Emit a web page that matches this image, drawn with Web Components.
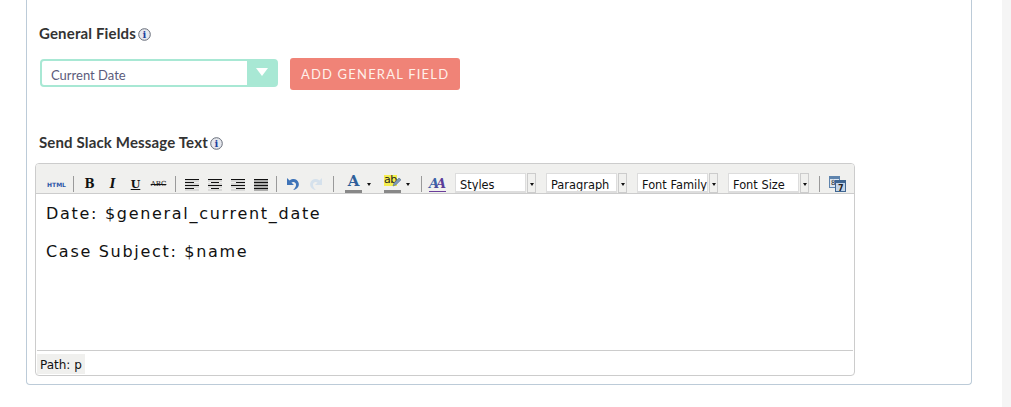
<!DOCTYPE html>
<html>
<head>
<meta charset="utf-8">
<title>Send Slack Message</title>
<style>
  html, body { margin: 0; padding: 0; background: #fff; }
  body { font-family: "Lato", sans-serif; overflow: hidden; }
</style>
</head>
<body>
<app-page>
  <field-label>General Fields</field-label>
  <div slot="fields">
    <field-select>Current Date</field-select>
    <add-button>ADD GENERAL FIELD</add-button>
  </div>
  <field-label slot="second">Send Slack Message Text</field-label>
  <rich-editor slot="editor">
    <tool-button>
      <span style="font:bold 6px 'DejaVu Sans',sans-serif;color:#2d56a8">HTML</span>
    </tool-button>
    <tool-sep></tool-sep>
    <tool-button><span style="font:bold 12px 'DejaVu Serif',serif;color:#111">B</span></tool-button>
    <tool-button><span style="font:italic bold 12px 'DejaVu Serif',serif;color:#111">I</span></tool-button>
    <tool-button><span style="font:bold 11px 'DejaVu Serif',serif;color:#111;text-decoration:underline">U</span></tool-button>
    <tool-button><span style="font:7px 'DejaVu Serif',serif;color:#111;text-decoration:line-through">ABC</span></tool-button>
    <tool-sep></tool-sep>
    <tool-button><svg width="16" height="13"><path d="M1 1.500h14M1 4.500h9M1 7.500h14M1 10.500h9" stroke="#111" fill="none"/><path d="M1 3h14M1 6h14M1 9h14M1 12h14" stroke="#999" stroke-width=".5" fill="none"/></svg></tool-button>
    <tool-button><svg width="16" height="13"><path d="M1 1.500h14M4 4.500h8M1 7.500h14M4 10.500h8" stroke="#111" fill="none"/><path d="M1 3h14M1 6h14M1 9h14M1 12h14" stroke="#999" stroke-width=".5" fill="none"/></svg></tool-button>
    <tool-button><svg width="16" height="13"><path d="M1 1.500h14M6 4.500h9M1 7.500h14M6 10.500h9" stroke="#111" fill="none"/><path d="M1 3h14M1 6h14M1 9h14M1 12h14" stroke="#999" stroke-width=".5" fill="none"/></svg></tool-button>
    <tool-button><svg width="16" height="13"><path d="M1 1.500h14M1 4.500h14M1 7.500h14M1 10.500h14" stroke="#111" fill="none"/><path d="M1 3h14M1 6h14M1 9h14M1 12h14" stroke="#111" stroke-width=".6" fill="none"/></svg></tool-button>
    <tool-sep style="width:9px"></tool-sep>
    <tool-button><svg width="14" height="14" viewBox="0 0 14 14"><path d="M1 1v7h7L5.400 5.400C7 4.500 9 4.800 9.800 6.500c.8 1.900-.2 4-2.600 6.500 4.400-.8 6.400-4 5.400-7.300C11.400 1.600 7 .8 3.600 3.400z" fill="#3f74b8"/></svg></tool-button>
    <tool-button><svg width="14" height="14" viewBox="0 0 14 14" style="transform:scaleX(-1)"><path d="M1 1v7h7L5.400 5.400C7 4.500 9 4.800 9.800 6.500c.8 1.900-.2 4-2.600 6.500 4.400-.8 6.400-4 5.400-7.300C11.400 1.600 7 .8 3.600 3.400z" fill="#d5e1ec"/></svg></tool-button>
    <tool-sep style="width:12px"></tool-sep>
    <tool-button arrow bar style="margin-left:3px"><span style="font:bold 15px 'DejaVu Serif',serif;color:#2f5f9a;line-height:15px">A</span></tool-button>
    <tool-button arrow bar style="margin-left:8px">
      <span style="position:relative;display:block;width:17px;height:14px">
        <span style="position:absolute;left:0;top:0;background:#f5ee4e;font:11px/10px 'DejaVu Sans',sans-serif;color:#222;letter-spacing:-.5px;padding-bottom:1px">ab</span>
        <svg width="10" height="11" style="position:absolute;right:0;top:2px"><path d="M2 9l1-3 5-5 2 1.800-5 5z" fill="#7d99b8" stroke="#54708e" stroke-width=".6"/></svg>
      </span>
    </tool-button>
    <tool-sep style="margin-left:4px"></tool-sep>
    <tool-button>
      <span style="font:italic bold 13px/13px 'DejaVu Serif',serif;color:#3a62a8;letter-spacing:-3px;padding:0 3px 1px 0;border-bottom:1.500px solid #6a3d9a"><span>A</span><span style="color:#5a3d98">A</span></span>
    </tool-button>
    <tool-select style="margin-left:6px">Styles</tool-select>
    <tool-select style="margin-left:10px">Paragraph</tool-select>
    <tool-select style="margin-left:10px">Font Family</tool-select>
    <tool-select style="margin-left:10px">Font Size</tool-select>
    <tool-sep style="width:21px"></tool-sep>
    <tool-button style="margin-left:-4px">
      <svg width="17" height="16" viewBox="0 0 17 16">
        <rect x=".5" y=".5" width="10" height="11" fill="#dce6f2" stroke="#5f84ad"/>
        <rect x=".5" y=".5" width="10" height="2.500" fill="#5f84ad"/>
        <rect x="6.500" y="4.500" width="10" height="11" fill="#c4d5e8" stroke="#3f6692"/>
        <rect x="6.500" y="4.500" width="10" height="2.500" fill="#3f6692"/>
        <text x="2" y="9" font-size="7" font-family="DejaVu Sans" fill="#222">8</text>
        <text x="9" y="14.500" font-size="8" font-weight="bold" font-family="DejaVu Sans" fill="#222">7</text>
      </svg>
    </tool-button>
    <p slot="content">Date: $general_current_date</p>
    <p slot="content">Case Subject: $name</p>
    <span slot="path">Path: p</span>
  </rich-editor>
</app-page>

<script>
class AppPage extends HTMLElement {
    constructor() {
        super();
        this.attachShadow({ mode: 'open' }).innerHTML = `
      <style>
        :host{ display:flex; width:1011px; height:407px; overflow:hidden; background:#fff; }
        .main{ flex:0 0 1002px; }
        .side{ flex:1; background:#f5f5f5; }
        .panel{
          box-sizing:border-box;
          width:946px;
          height:385px;
          margin-left:26px;
          padding:25px 0 0 8px;
          border:1px solid #bccbd8;
          border-top:0;
          border-radius:0 0 4px 4px;
        }
        .first{ display:block; margin-left:4px; }
        .row{ margin:16px 0 0 5px; }
        .second{ display:block; margin:44px 0 0 4px; }
        .second2{ display:block; margin-top:12px; }
      </style>
      <div class="main">
        <div class="panel">
          <div class="first"><slot></slot></div>
          <div class="row"><slot name="fields"></slot></div>
          <div class="second"><slot name="second"></slot></div>
          <div class="second2"><slot name="editor"></slot></div>
        </div>
      </div>
      <div class="side"></div>
    `;
    }
}

class FieldLabel extends HTMLElement {
    constructor() {
        super();
        this.attachShadow({ mode: 'open' }).innerHTML = `
      <style>
        :host{ display:flex; align-items:center; height:17px; font:bold 15px/17px "Lato",sans-serif; color:#333; letter-spacing:.15px; }
        svg{ margin-left:2px; margin-top:2px; }
      </style>
      <slot></slot>
      <svg width="13" height="13" viewBox="0 0 13 13">
        <circle cx="6.500" cy="6.500" r="5.800" fill="#e6e8ee" stroke="#666c78"/>
        <text x="6.500" y="10" text-anchor="middle" font-size="10" font-weight="bold" font-family="DejaVu Serif" fill="#1c3f9e">i</text>
      </svg>
    `;
    }
}

class FieldSelect extends HTMLElement {
    constructor() {
        super();
        this.attachShadow({ mode: 'open' }).innerHTML = `
      <style>
        :host{
          display:inline-flex; box-sizing:border-box; vertical-align:top;
          width:238px; height:28px; margin-top:1px;
          border:2px solid #a8e8d4; border-radius:4px;
          font:13px "Lato",sans-serif; color:#5b5b7b; background:#fff;
        }
        .text{ flex:1; padding:2px 0 0 9px; line-height:24px; }
        .arrow{ flex:0 0 29px; background:#a8e8d4; display:flex; justify-content:center; padding-top:7px; box-sizing:border-box; }
        .arrow i{ width:0; height:0; border:6px solid transparent; border-top:8px solid #fff; border-bottom:0; }
      </style>
      <div class="text"><slot></slot></div>
      <div class="arrow"><i></i></div>
    `;
    }
}

class AddButton extends HTMLElement {
    constructor() {
        super();
        this.attachShadow({ mode: 'open' }).innerHTML = `
      <style>
        :host{
          display:inline-flex; align-items:center; justify-content:center; vertical-align:top;
          width:170px; height:32px; margin-left:8px;
          background:#f08377; border-radius:3px;
          font:13px "Lato",sans-serif; letter-spacing:1.2px; color:#fff0ea;
        }
      </style>
      <slot></slot>
    `;
    }
}

class RichEditor extends HTMLElement {
    constructor() {
        super();
        this.attachShadow({ mode: 'open' }).innerHTML = `
      <style>
        :host{
          display:flex; flex-direction:column; box-sizing:border-box;
          width:820px; height:213px;
          border:1px solid #ccc; border-radius:4px; background:#fff;
        }
        .toolbar{
          display:flex; align-items:flex-start; height:30px; box-sizing:border-box;
          padding:9px 0 0 9px;
          background:#f0f0ee; border-bottom:1px solid #ccc; border-radius:3px 3px 0 0;
        }
        .content{
          flex:1;
          padding:10px 10px 0;
          font:16px/20px "DejaVu Sans",sans-serif; letter-spacing:1.7px; color:#111;
        }
        ::slotted(p){ margin:0 0 18px; }
        .status{
          height:25px; box-sizing:border-box; margin:0 1px;
          padding:3px 0 0 0;
          border-top:1px solid #ccc;
          font:12px "DejaVu Sans",sans-serif; color:#111;
        }
        .path{ display:inline-block; background:#f0f0ee; padding:1px 3px 0; height:19px; line-height:20px; }
      </style>
      <div class="toolbar"><slot></slot></div>
      <div class="content"><slot name="content"></slot></div>
      <div class="status"><span class="path"><slot name="path"></slot></span></div>
    `;
    }
}

class ToolButton extends HTMLElement {
    constructor() {
        super();
        const arrow = this.hasAttribute('arrow');
        const bar = this.hasAttribute('bar');
        this.attachShadow({ mode: 'open' }).innerHTML = `
      <style>
        :host{ display:flex; flex:none; height:20px; position:relative; }
        .icon{ width:23px; height:20px; display:flex; align-items:center; justify-content:center; position:relative; box-sizing:border-box; ${bar ? 'padding-bottom:3px;' : 'padding-top:2px;'} }
        .bar{ position:absolute; left:3px; right:3px; bottom:0; height:3px; background:#888; }
        .arrow{ width:8px; height:20px; display:flex; justify-content:center; padding-top:10px; box-sizing:border-box; }
        .arrow i{ width:0; height:0; border:2.500px solid transparent; border-top:3px solid #111; border-bottom:0; }
      </style>
      <div class="icon"><slot></slot>${bar ? '<div class="bar"></div>' : ''}</div>
      ${arrow ? '<div class="arrow"><i></i></div>' : ''}
    `;
    }
}

class ToolSep extends HTMLElement {
    constructor() {
        super();
        this.attachShadow({ mode: 'open' }).innerHTML = `
      <style>
        :host{ display:flex; justify-content:center; flex:none; width:10px; height:16px; margin-top:3px; }
        i{ width:1px; height:100%; background:#9a9a9a; }
      </style>
      <i></i>
    `;
    }
}

class ToolSelect extends HTMLElement {
    constructor() {
        super();
        this.attachShadow({ mode: 'open' }).innerHTML = `
      <style>
        :host{ display:flex; flex:none; height:20px; font:11.4px "DejaVu Sans",sans-serif; color:#111; }
        .text{ box-sizing:border-box; width:71px; height:20px; padding:3px 0 0 4px; line-height:16px; background:#fff; border:solid #ddd; border-width:1px 1px 2px 1px; white-space:nowrap; overflow:hidden; }
        .arrow{ box-sizing:border-box; width:9px; margin-left:1px; height:20px; background:#f0f0ee; border:1px solid #ccc; display:flex; justify-content:center; padding-top:9px; }
        .arrow i{ width:0; height:0; border:2.500px solid transparent; border-top:3px solid #111; border-bottom:0; }
      </style>
      <div class="text"><slot></slot></div>
      <div class="arrow"><i></i></div>
    `;
    }
}

customElements.define('app-page', AppPage);
customElements.define('field-label', FieldLabel);
customElements.define('field-select', FieldSelect);
customElements.define('add-button', AddButton);
customElements.define('rich-editor', RichEditor);
customElements.define('tool-button', ToolButton);
customElements.define('tool-sep', ToolSep);
customElements.define('tool-select', ToolSelect);
</script>
</body>
</html>
